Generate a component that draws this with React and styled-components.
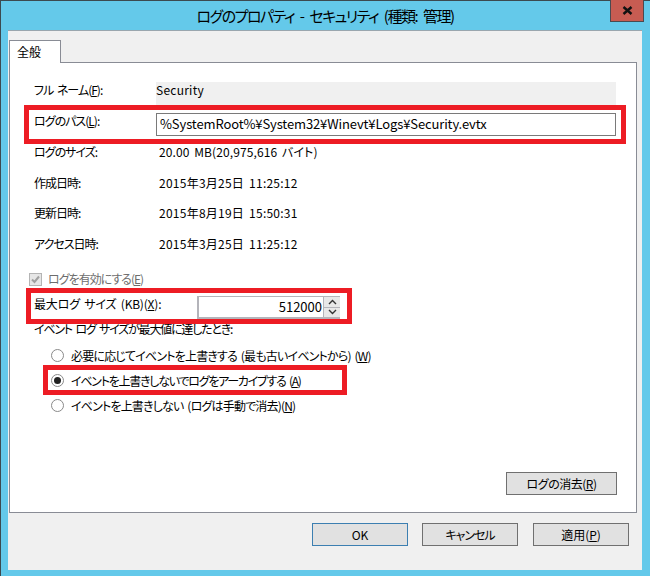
import React from "react";
import styled, { createGlobalStyle } from "styled-components";

const Global = createGlobalStyle`
  html, body { margin: 0; padding: 0; background: #64c9ea; }
  body { font-family: "Noto Sans CJK JP", "Liberation Sans", sans-serif; font-size: 12px; color: #000; font-feature-settings: "palt"; word-spacing: 2px; }
  * { box-sizing: border-box; }
`;

const Window = styled.div`
  position: relative;
  width: 650px;
  height: 576px;
  display: flex;
  flex-direction: column;
  background: #64c9ea;
  border-top: 1px solid #3c4a50;
  border-left: 1px solid #3c4a50;
  padding: 0 8px 6px 7px;
`;

const TitleBar = styled.div`
  height: 29px;
  flex: none;
  display: flex;
  align-items: center;
  justify-content: center;
  font-size: 15px;
  letter-spacing: -1.5px;
  word-spacing: 4px;
`;

const CloseButton = styled.div`
  position: absolute;
  top: -1px;
  right: 6px;
  width: 34px;
  height: 22px;
  background: #c75c52;
  border: 1px solid #4a4a50;
  border-top: none;
  display: flex;
  align-items: center;
  justify-content: center;
`;

const Client = styled.div`
  flex: 1;
  display: flex;
  flex-direction: column;
  background: #f0f0f0;
  border-top: 1px solid #9aa6ae;
  padding: 9px 5px 0 1px;
`;

const TabStrip = styled.div`
  height: 22px;
  flex: none;
  display: flex;
  position: relative;
  z-index: 1;
`;

const Tab = styled.div`
  width: 52px;
  height: 23px;
  background: #fff;
  border: 1px solid #898c95;
  border-bottom: none;
  padding-left: 7px;
  line-height: 21px;
`;

const Panel = styled.div`
  height: 451px;
  flex: none;
  display: flex;
  flex-direction: column;
  background: #fff;
  border: 1px solid #898c95;
  padding: 19px 20px 17px 24px;
`;

const Row = styled.div`
  display: flex;
  align-items: flex-start;
  height: ${(p) => p.$h}px;
  margin-top: ${(p) => p.$gap || 0}px;
  padding-left: ${(p) => p.$indent || 0}px;
  line-height: 16px;
`;

const Label = styled.div`
  width: ${(p) => p.$w || 122}px;
  flex: none;
  white-space: pre;
  letter-spacing: ${(p) => p.$ls ?? -1}px;
`;

const ReadOnly = styled.div`
  flex: 1;
  height: 23px;
  background: #f0f0f0;
`;

const Value = styled.div`
  padding-left: ${(p) => p.$pad || 0}px;
  white-space: pre;
  letter-spacing: ${(p) => p.$ls ?? 0}px;
`;

const TextInput = styled.div`
  flex: 1;
  height: 23px;
  border: 1px solid #7a7a7a;
  background: #fff;
  padding-left: 3px;
  font-size: 13px;
  line-height: 20px;
  letter-spacing: -0.12px;
  white-space: pre;
`;

const CheckBox = styled.div`
  width: 13px;
  height: 13px;
  margin: 2px 6px 0 -5px;
  flex: none;
  background: #e6e6e6;
  border: 1px solid #b4b4b4;
  display: flex;
  align-items: center;
  justify-content: center;
`;

const Muted = styled.span`
  color: #6d6d6d;
  letter-spacing: -1px;
`;

const Spin = styled.div`
  width: 143px;
  height: 23px;
  flex: none;
  display: flex;
  border: 2px solid #b4b4ba;
  border-right: none;
  border-top-width: 1px;
  background: #fff;
`;

const SpinValue = styled.div`
  flex: 1;
  text-align: right;
  padding-right: 1px;
  line-height: 20px;
  font-size: 13px;
`;

const SpinButtons = styled.div`
  width: 17px;
  flex: none;
  display: flex;
  flex-direction: column;
  gap: 1px;
  background: #b4b4ba;
  border-left: 1px solid #b4b4ba;
`;

const SpinButton = styled.div`
  flex: 1;
  background: #e8e8e8;
  display: flex;
  align-items: center;
  justify-content: center;
`;

const Radio = styled.div`
  width: 13px;
  height: 13px;
  flex: none;
  margin: 1px 7px 0 0;
  border-radius: 50%;
  border: 1px solid #8a8a8a;
  background: #fff;
  display: flex;
  align-items: center;
  justify-content: center;
`;

const RadioDot = styled.div`
  width: 7px;
  height: 7px;
  border-radius: 50%;
  background: #222;
`;

const Button = styled.div`
  width: ${(p) => p.$w || 96}px;
  height: 23px;
  background: #e1e1e1;
  border: 1px solid ${(p) => (p.$primary ? "#3c7fb1" : "#707070")};
  margin-right: ${(p) => (p.$primary ? -1 : 0)}px;
  letter-spacing: ${(p) => p.$ls ?? 0}px;
  display: flex;
  align-items: center;
  justify-content: center;
  white-space: pre;
`;

const ClearButton = styled(Button)`
  margin-top: auto;
  margin-right: -1px;
  align-self: flex-end;
`;

const Footer = styled.div`
  display: flex;
  justify-content: flex-end;
  gap: 15px;
  padding: 10px 8px 0 0;
`;

const Highlight = styled.div`
  position: absolute;
  left: ${(p) => p.$x - 1}px;
  top: ${(p) => p.$y - 1}px;
  width: ${(p) => p.$w}px;
  height: ${(p) => p.$h}px;
  border: 5px solid #ed1c24;
  pointer-events: none;
`;

const U = styled.span`
  text-decoration: underline;
  text-underline-offset: 1px;
`;

export default function App() {
  return (
    <>
      <Global />
      <Window>
        <TitleBar>ログのプロパティ - セキュリティ (種類: 管理)</TitleBar>
        <CloseButton>
          <svg width="11" height="9" viewBox="0 0 11 9">
            <path d="M1.5 1 L9.5 8 M9.5 1 L1.5 8" stroke="#111" strokeWidth="2.4" fill="none" />
          </svg>
        </CloseButton>
        <Client>
          <TabStrip>
            <Tab>全般</Tab>
          </TabStrip>
          <Panel>
            <Row $h={23}>
              <Label>フル ネーム(<U>F</U>):</Label>
              <ReadOnly><Value $ls={0.25}>Security</Value></ReadOnly>
            </Row>
            <Row $h={23} $gap={8}>
              <Label>ログのパス(<U>L</U>):</Label>
              <TextInput>%SystemRoot%¥System32¥Winevt¥Logs¥Security.evtx</TextInput>
            </Row>
            <Row $h={16} $gap={8}>
              <Label>ログのサイズ:</Label>
              <Value $pad={3} $ls={0.1}>20.00 MB(20,975,616 バイト)</Value>
            </Row>
            <Row $h={16} $gap={15}>
              <Label>作成日時:</Label>
              <Value $pad={3} $ls={0.25}>2015年3月25日 11:25:12</Value>
            </Row>
            <Row $h={16} $gap={14}>
              <Label>更新日時:</Label>
              <Value $pad={3} $ls={0.25}>2015年8月19日 15:50:31</Value>
            </Row>
            <Row $h={16} $gap={15}>
              <Label>アクセス日時:</Label>
              <Value $pad={3} $ls={0.25}>2015年3月25日 11:25:12</Value>
            </Row>
            <Row $h={16} $gap={19}>
              <CheckBox>
                <svg width="11" height="11" viewBox="0 0 11 11">
                  <path d="M2 5.5 L4.5 8 L9 2.5" stroke="#a0a0a0" strokeWidth="2" fill="none" />
                </svg>
              </CheckBox>
              <Muted>ログを有効にする(<U>E</U>)</Muted>
            </Row>
            <Row $h={23} $gap={9}>
              <Label $w={163} $ls={-0.2}>最大ログ サイズ (KB)(<U>X</U>):</Label>
              <Spin>
                <SpinValue>512000</SpinValue>
                <SpinButtons>
                  <SpinButton>
                    <svg width="9" height="6" viewBox="0 0 9 6">
                      <path d="M1 5 L4.5 1.5 L8 5" stroke="#333" strokeWidth="1.4" fill="none" />
                    </svg>
                  </SpinButton>
                  <SpinButton>
                    <svg width="9" height="6" viewBox="0 0 9 6">
                      <path d="M1 1 L4.5 4.5 L8 1" stroke="#333" strokeWidth="1.4" fill="none" />
                    </svg>
                  </SpinButton>
                </SpinButtons>
              </Spin>
            </Row>
            <Row $h={16} $gap={2}>
              <Value $ls={-1.2}>イベント ログ サイズが最大値に達したとき:</Value>
            </Row>
            <Row $h={16} $gap={11} $indent={17}>
              <Radio />
              <Value $ls={-0.81}>必要に応じてイベントを上書きする (最も古いイベントから) (<U>W</U>)</Value>
            </Row>
            <Row $h={16} $gap={9} $indent={17}>
              <Radio><RadioDot /></Radio>
              <Value $ls={-1.25}>イベントを上書きしないでログをアーカイブする (<U>A</U>)</Value>
            </Row>
            <Row $h={16} $gap={9} $indent={17}>
              <Radio />
              <Value $ls={-0.82}>イベントを上書きしない (ログは手動で消去)(<U>N</U>)</Value>
            </Row>
            <ClearButton $w={111} $ls={-0.5}>ログの消去(<U>R</U>)</ClearButton>
          </Panel>
          <Footer>
            <Button $primary>OK</Button>
            <Button $ls={-1}>キャンセル</Button>
            <Button>適用(<U>P</U>)</Button>
          </Footer>
        </Client>
        <Highlight $x={24} $y={105} $w={602} $h={39} />
        <Highlight $x={26} $y={288} $w={326} $h={36} />
        <Highlight $x={43} $y={365} $w={304} $h={30} />
      </Window>
    </>
  );
}
